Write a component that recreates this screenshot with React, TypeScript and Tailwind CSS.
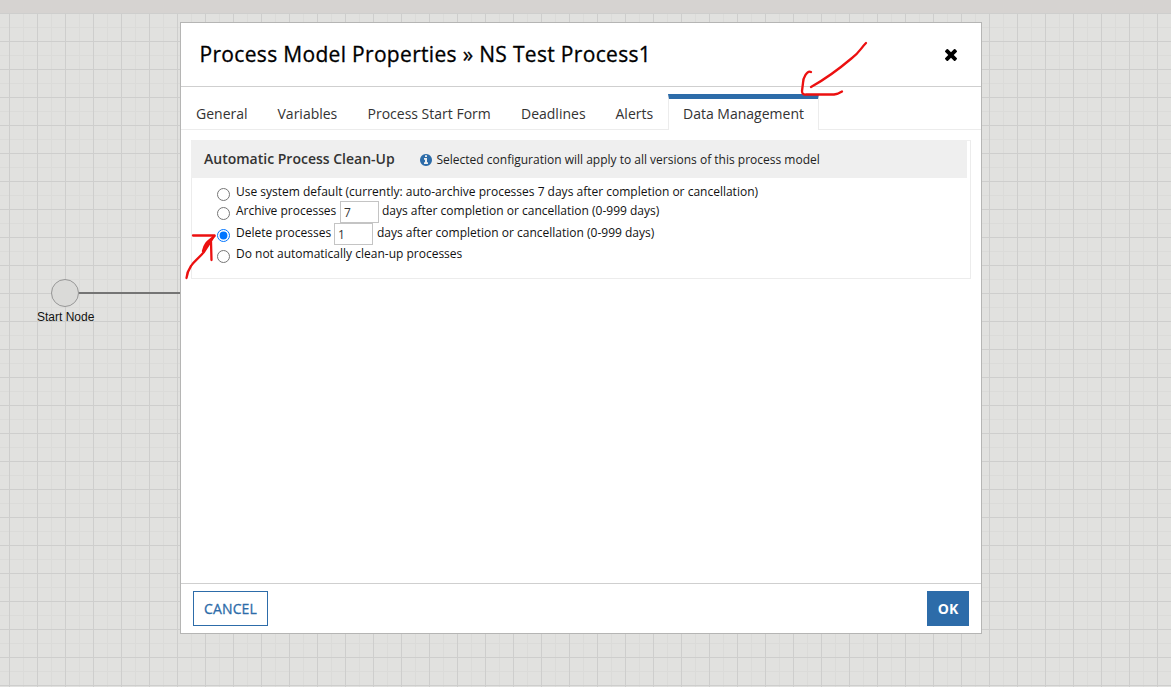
import type { ReactNode } from "react";

const tabs = [
  { label: "General", width: "w-[51.5px]" },
  { label: "Variables", width: "w-[60px]" },
  { label: "Process Start Form", width: "w-[123.5px]" },
  { label: "Deadlines", width: "w-[64.5px]" },
  { label: "Alerts", width: "w-[38px]" },
];

export default function App() {
  return (
    <div className="relative h-[687px] w-[1171px] overflow-hidden bg-[#e1e1df] font-['Open_Sans',sans-serif] whitespace-nowrap">
      <Canvas />

      <div className="absolute top-[22px] left-[180px] flex h-[612px] w-[802px] flex-col border border-[#b5b5b4] bg-white">
        <header className="flex h-16 shrink-0 items-center justify-between border-b border-[#cfcfcf] pr-6 pl-[18.5px]">
          <h1 className="text-[21px] tracking-[0.32px] text-black [-webkit-text-stroke:0.3px_#000]">
            Process Model Properties » NS Test Process1
          </h1>
          <CloseIcon />
        </header>

        <nav className="flex h-[43px] shrink-0 items-end text-[14px] text-[#333]">
          <div className="flex h-9 grow items-center gap-[30px] border-b border-[#ececec] pt-1 pl-[15px]">
            {tabs.map((t) => (
              <span key={t.label} className={t.width}>
                {t.label}
              </span>
            ))}
          </div>
          <div className="flex h-9 w-[151px] shrink-0 items-center justify-center border-x border-t-[5px] border-x-[#ececec] border-t-[#2d6ca9] pb-0.5">
            Data Management
          </div>
          <div className="h-9 w-[162px] shrink-0 border-b border-[#ececec]" />
        </nav>

        <main className="grow px-2.5 pt-2.5">
          <section className="h-[139px] w-[780px] border border-[#ececec] border-t-[#efefef]">
            <div className="-ml-px flex h-[37px] w-[776px] items-center bg-[#efefef] pl-[13px]">
              <h2 className="w-[216px] pb-0.5 text-[14px] font-semibold text-[#333]">Automatic Process Clean-Up</h2>
              <InfoIcon />
              <span className="ml-[4.5px] text-[12px] text-[#222]">
                Selected configuration will apply to all versions of this process model
              </span>
            </div>
            <div className="flex flex-col pt-1 pl-[25px] text-[12px] text-[#111]">
              <Option size="h-[19px] leading-[19px]">
                Use system default (currently: auto-archive processes 7 days after completion or cancellation)
              </Option>
              <Option size="h-[22px] leading-5">
                <span className="w-[104px]">Archive processes</span>
                <DaysInput value="7" />
                <span className="ml-[3px]">days after completion or cancellation (0-999 days)</span>
              </Option>
              <Option size="h-[21px] leading-5" checked>
                <span className="w-[98px]">Delete processes</span>
                <DaysInput value="1" />
                <span className="ml-[4px]">days after completion or cancellation (0-999 days)</span>
              </Option>
              <Option size="h-[19px] leading-[19px]">Do not automatically clean-up processes</Option>
            </div>
          </section>
        </main>

        <footer className="flex h-[50px] shrink-0 items-center justify-between border-t border-[#cfcfcf] px-3">
          <button className="h-[35px] w-[75px] bg-white text-[14px] tracking-[0.15px] text-[#2d6ca9] ring-1 ring-[#2d6ca9] ring-inset [-webkit-text-stroke:0.3px_#2d6ca9]">
            CANCEL
          </button>
          <button className="h-[35px] w-[42px] bg-[#2d6ca9] text-[14px] font-bold text-white">OK</button>
        </footer>
      </div>

      <Arrows />
    </div>
  );
}

function Option({ size, checked, children }: { size: string; checked?: boolean; children: ReactNode }) {
  return (
    <label className={`flex items-start ${size}`}>
      <input
        type="radio"
        name="cleanup"
        defaultChecked={checked}
        className="mt-1.5 mr-1.5 size-[13px] shrink-0"
      />
      {children}
    </label>
  );
}

function DaysInput({ value }: { value: string }) {
  return (
    <input
      type="text"
      defaultValue={value}
      className="h-[22px] w-[39px] shrink-0 border border-[#c4c4c4] bg-white pl-[3px] text-[12px] text-[#333]"
    />
  );
}

function Canvas() {
  return (
    <>
      <svg className="absolute inset-0" width="1171" height="687">
        <defs>
          <pattern id="grid" x="9" y="13" width="28" height="28" patternUnits="userSpaceOnUse">
            <path d="M14.5 0V28M0 14.5H28" stroke="#dbdbd9" />
            <path d="M0.5 0V28M0 0.5H28" stroke="#cececd" />
          </pattern>
        </defs>
        <rect width="1171" height="687" fill="url(#grid)" />
        <rect width="1171" height="13" fill="#d6d3d1" />
        <path d="M78 293H181" stroke="#747474" strokeWidth="2" />
        <circle cx="65" cy="293" r="13.5" fill="#dadad8" stroke="#969696" />
      </svg>
      <div className="absolute top-[309px] left-[37px] font-['Liberation_Sans',sans-serif] text-[12px] leading-4 text-[#111]">
        Start Node
      </div>
    </>
  );
}

function CloseIcon() {
  return (
    <svg width="12" height="12" viewBox="110 366 1188 1188" fill="#000">
      <path d="M1298 1322q0 40-28 68l-136 136q-28 28-68 28t-68-28l-294-294-294 294q-28 28-68 28t-68-28l-136-136q-28-28-28-68t28-68l294-294-294-294q-28-28-28-68t28-68l136-136q28-28 68-28t68 28l294 294 294-294q28-28 68-28t68 28l136 136q28 28 28 68t-28 68l-294 294 294 294q28 28 28 68z" />
    </svg>
  );
}

function InfoIcon() {
  return (
    <svg className="mt-px" width="12" height="12" viewBox="128 128 1536 1536" fill="#2d6ca9">
      <path d="M1152 1376v-160q0-14-9-23t-23-9h-96v-512q0-14-9-23t-23-9h-320q-14 0-23 9t-9 23v160q0 14 9 23t23 9h96v320h-96q-14 0-23 9t-9 23v160q0 14 9 23t23 9h448q14 0 23-9t9-23zm-128-896v-160q0-14-9-23t-23-9h-192q-14 0-23 9t-9 23v160q0 14 9 23t23 9h192q14 0 23-9t9-23zm640 416q0 209-103 385.5t-279.5 279.5-385.5 103-385.5-103-279.5-279.5-103-385.5 103-385.5 279.5-279.5 385.5-103 385.5 103 279.5 279.5 103 385.5z" />
    </svg>
  );
}

// hand-drawn red pen strokes
function Arrows() {
  return (
    <svg
      className="pointer-events-none absolute inset-0"
      width="1171"
      height="687"
      fill="none"
      stroke="#ec1010"
      strokeWidth="2.3"
      strokeLinecap="round"
      strokeLinejoin="round"
    >
      <path d="M866 43C861 48 859 53 852 58C839 69 829 77 811 87" />
      <path d="M811 72C807 70 803 78 803 83L802 91Q802 95 806 94.500H834Q838 94 842 91.500" />
      <path d="M193 235.500H214.500L204 252C197 260 194 261 191 266Q187 272 186.500 278" />
      <path d="M214.500 236C209 241 205 242 203 251L209 243L211 242L211.500 260" />
    </svg>
  );
}
